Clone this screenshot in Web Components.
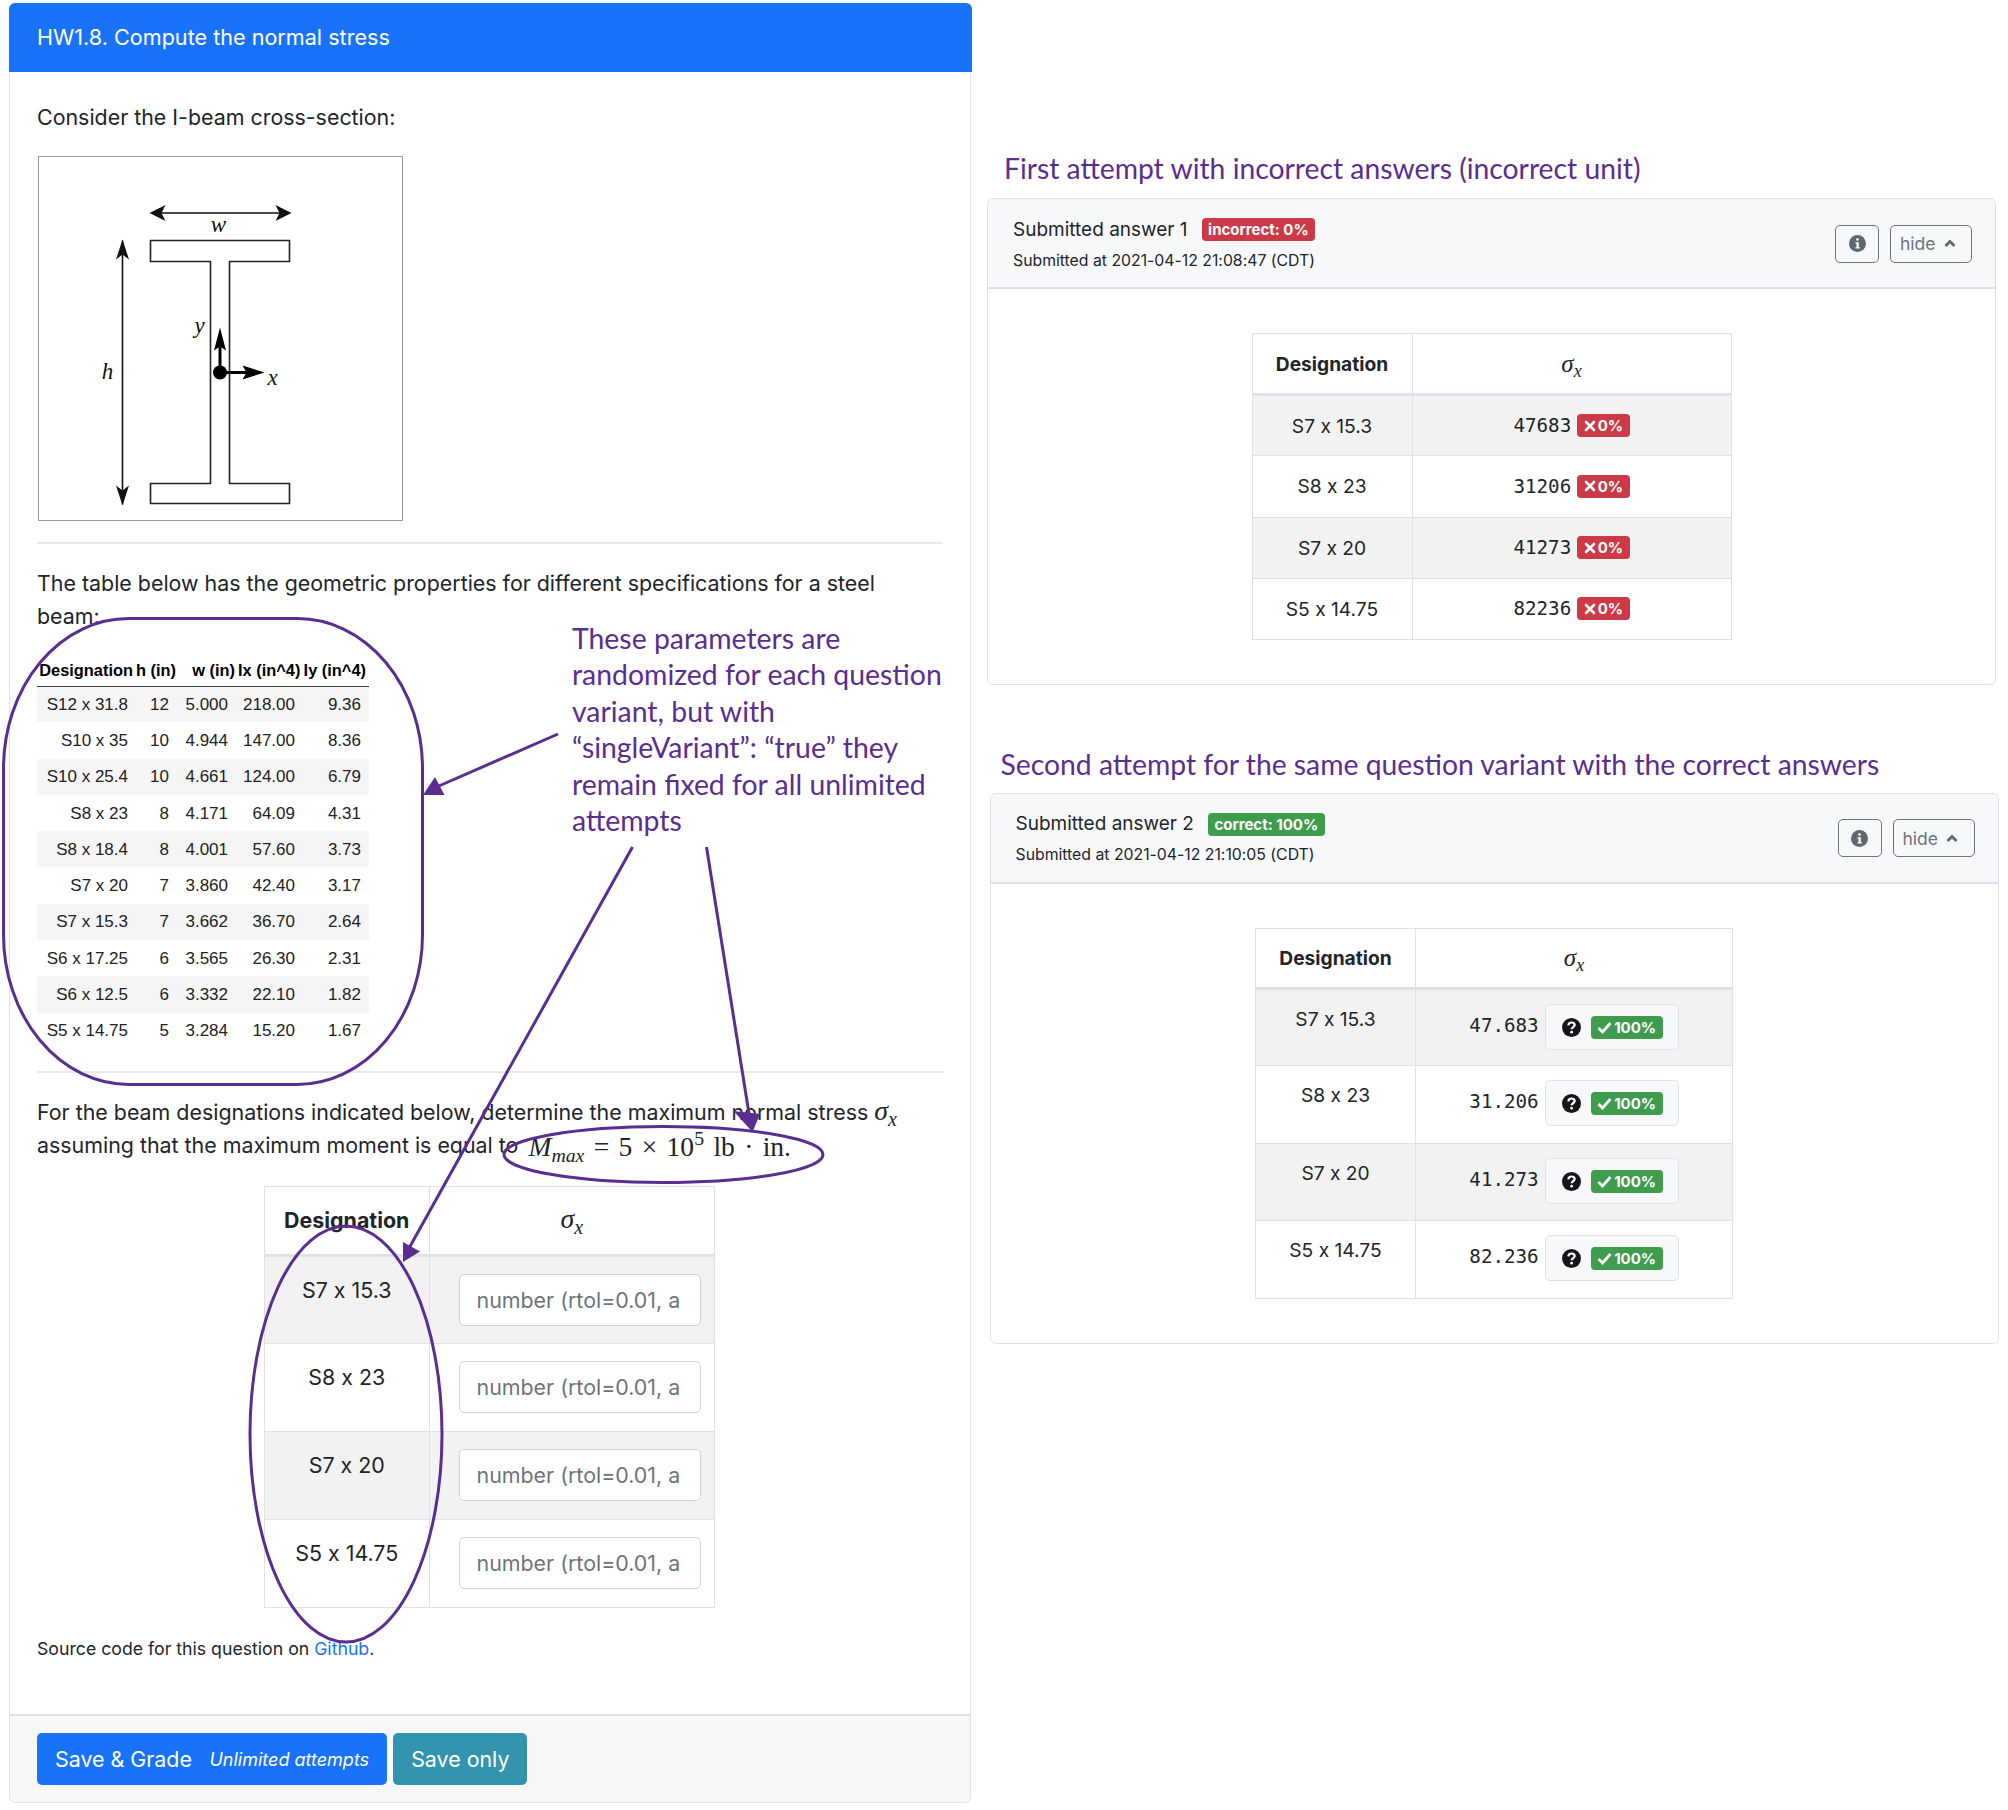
<!DOCTYPE html>
<html lang="en">
<head>
<meta charset="utf-8">
<title>HW1.8</title>
<style>
  html, body { margin: 0; background: #fff; }
  body { width: 2008px; height: 1810px; overflow: hidden; position: relative; font-family: Inter, "Liberation Sans", sans-serif; font-feature-settings: "calt" 0; color: #212529; }
  .page { display: flex; align-items: flex-start; padding: 3px 0 0 9px; }
</style>
</head>
<body>
<div class="page">
  <hw-question title="HW1.8. Compute the normal stress">
    <hw-text>Consider the I-beam cross-section:</hw-text>
    <beam-figure></beam-figure>
    <hw-rule></hw-rule>
    <hw-text>The table below has the geometric properties for different specifications for a steel<br>beam:</hw-text>
    <geo-table></geo-table>
    <hw-rule class="second"></hw-rule>
    <hw-text>For the beam designations indicated below, determine the maximum normal stress <sigma-x></sigma-x><br>assuming that the maximum moment is equal to <max-moment></max-moment></hw-text>
    <answer-table mode="input"></answer-table>
    <source-note></source-note>
    <hw-button slot="footer" kind="primary">Save &amp; Grade <i>Unlimited attempts</i></hw-button>
    <hw-button slot="footer" kind="info">Save only</hw-button>
  </hw-question>
  <attempt-column></attempt-column>
</div>
<annot-layer></annot-layer>

<script>
const PURPLE = '#5a2d91'

class HwQuestion extends HTMLElement {
  constructor() {
    super()
    this.attachShadow({ mode: 'open' })
    this.shadowRoot.innerHTML = `
      <style>
        :host { display: flex; flex-direction: column; width: 962px; height: 1800px; box-sizing: border-box; border: 1.5px solid #e2e2e2; border-radius: 6px; font-size: 21.4px; line-height: 33px; }
        header { background: #1873fa; color: #fff; font-size: 21.6px; height: 69px; margin: -1.5px -1.5px 0; border-radius: 6px 6px 0 0; padding: 0 28.500px; display: flex; align-items: center; box-sizing: border-box; }
        main { flex: 1; padding: 29px 27px 0; }
        footer { height: 88px; box-sizing: border-box; background: #f7f7f7; border-top: 2px solid #e0e0e0; padding: 17px 27px; display: flex; gap: 6px; border-radius: 0 0 6px 6px; }
      </style>
      <header></header>
      <main><slot></slot></main>
      <footer><slot name="footer"></slot></footer>`
    this.shadowRoot.querySelector('header').textContent = this.getAttribute('title')
  }
}

class HwText extends HTMLElement {
  constructor() {
    super()
    this.attachShadow({ mode: 'open' })
    this.shadowRoot.innerHTML = `<style>:host { display: block; white-space: nowrap; }</style><slot></slot>`
  }
}

class HwRule extends HTMLElement {
  constructor() {
    super()
    this.attachShadow({ mode: 'open' })
    this.shadowRoot.innerHTML = `<style>:host { display: block; height: 2px; background: #e8e8e8; margin: 21px 0 23px; width: 906px; }
      :host(.second) { margin: 22px 0 23px; }</style>`
  }
}

class HwButton extends HTMLElement {
  constructor() {
    super()
    this.attachShadow({ mode: 'open' })
    this.shadowRoot.innerHTML = `
      <style>
        :host { display: flex; align-items: center; height: 52px; box-sizing: border-box; padding: 0 18px; border-radius: 5px; color: #fff; font-size: 21.4px; white-space: nowrap; background: #1873fa; }
        :host([kind=info]) { background: #3594ad; }
        ::slotted(i) { font-size: 18px; margin-left: 17.500px; }
      </style><slot></slot>`
  }
}

class SigmaX extends HTMLElement {
  constructor() {
    super()
    this.attachShadow({ mode: 'open' })
    this.shadowRoot.innerHTML = `
      <style>
        :host { display: inline-block; font: italic 1.3em "Liberation Serif", serif; line-height: 1; white-space: nowrap; }
        sub { font-size: .72em; vertical-align: -0.28em; line-height: 0; }
      </style>σ<sub>x</sub>`
  }
}

class MaxMoment extends HTMLElement {
  constructor() {
    super()
    this.attachShadow({ mode: 'open' })
    this.shadowRoot.innerHTML = `
      <style>
        :host { display: inline-block; margin-left: 4px; font: 27.500px "Liberation Serif", serif; word-spacing: 2.500px; line-height: 1; white-space: nowrap; vertical-align: -3px; }
        sub { font-size: .72em; vertical-align: -0.3em; line-height: 0; font-style: italic; }
        sup { font-size: .72em; vertical-align: .55em; line-height: 0; }
      </style><i>M</i><sub>max</sub> = 5 × 10<sup>5</sup> lb · in.`
  }
}

class BeamFigure extends HTMLElement {
  constructor() {
    super()
    this.attachShadow({ mode: 'open' })
    this.shadowRoot.innerHTML = `
      <style>
        :host { display: block; width: 365px; height: 365px; box-sizing: border-box; border: 1.5px solid #9a9a9a; margin: 22px 0 0 .75px; }
        svg { display: block; }
        text { font: italic 23px "Liberation Serif", serif; fill: #111; text-anchor: middle; }
      </style>
      <svg width="362" height="362" viewBox="1.5 0.5 362 362">
        <path d="M113 84H252V105H192V327H252V347H113V327H173V105H113Z" fill="none" stroke="#222" stroke-width="1.6"/>
        <path d="M114 56.500H252" stroke="#111" stroke-width="1.6"/>
        <path d="M112 56.500l16-8-4 8 4 8zM254 56.500l-16-8 4 8-4 8z" fill="#111"/>
        <path d="M85 84V348" stroke="#111" stroke-width="1.6"/>
        <path d="M85 83l-6.500 20 6.500-5 6.500 5zM85 349l-6.500-20 6.500 5 6.500-5z" fill="#111"/>
        <path d="M182.500 216V190" stroke="#000" stroke-width="3"/>
        <path d="M182.500 171l-6 23 6-4 6 4z" fill="#000"/>
        <path d="M182.500 216H212" stroke="#000" stroke-width="3"/>
        <path d="M227 216l-22-7 4 7-4 7z" fill="#000"/>
        <circle cx="182.500" cy="216" r="7" fill="#000"/>
        <text x="181" y="75">w</text>
        <text x="70" y="222">h</text>
        <text x="162" y="176">y</text>
        <text x="235" y="228">x</text>
      </svg>`
  }
}

class GeoTable extends HTMLElement {
  constructor() {
    super()
    this.attachShadow({ mode: 'open' })
    const rows = [
      ['S12 x 31.8', '12', '5.000', '218.00', '9.36'],
      ['S10 x 35', '10', '4.944', '147.00', '8.36'],
      ['S10 x 25.4', '10', '4.661', '124.00', '6.79'],
      ['S8 x 23', '8', '4.171', '64.09', '4.31'],
      ['S8 x 18.4', '8', '4.001', '57.60', '3.73'],
      ['S7 x 20', '7', '3.860', '42.40', '3.17'],
      ['S7 x 15.3', '7', '3.662', '36.70', '2.64'],
      ['S6 x 17.25', '6', '3.565', '26.30', '2.31'],
      ['S6 x 12.5', '6', '3.332', '22.10', '1.82'],
      ['S5 x 14.75', '5', '3.284', '15.20', '1.67']
    ]
    const body = rows.map(r => `<tr>${r.map(c => `<td>${c}</td>`).join('')}</tr>`).join('')
    this.shadowRoot.innerHTML = `
      <style>
        :host { display: block; margin-top: 23px; font-family: "Liberation Sans", sans-serif; }
        table { border-collapse: collapse; table-layout: fixed; width: 332px; }
        th { font-size: 16.4px; font-weight: bold; height: 30px; padding: 0 3px 0 0; text-align: right; border-bottom: 1.5px solid #444; color: #000; white-space: nowrap; line-height: 1; }
        td { font-size: 17px; height: 36.300px; padding: 0 8px 0 0; text-align: right; box-sizing: border-box; line-height: 1; color: #222; }
        tr:nth-child(odd) td { background: #f5f5f5; }
        td:nth-child(3) { padding-right: 10px; }
      </style>
      <table>
        <colgroup><col style="width:99px"><col style="width:41px"><col style="width:61px"><col style="width:65px"><col style="width:66px"></colgroup>
        <thead><tr><th>Designation</th><th>h (in)</th><th>w (in)</th><th>Ix (in^4)</th><th>Iy (in^4)</th></tr></thead>
        <tbody>${body}</tbody>
      </table>`
  }
}

class ScoreBadge extends HTMLElement {
  constructor() {
    super()
    this.attachShadow({ mode: 'open' })
    const mark = {
      x: `<svg width="12" height="12" viewBox="0 0 12 12"><path d="M2 2L10 10M10 2L2 10" stroke="#fff" stroke-width="2.600" stroke-linecap="round"/></svg>`,
      check: `<svg width="15" height="13" viewBox="0 0 15 13"><path d="M1.500 7L5.500 11L13.500 2" fill="none" stroke="#fff" stroke-width="2.800"/></svg>`
    }[this.getAttribute('mark')] || ''
    this.shadowRoot.innerHTML = `
      <style>
        :host { display: inline-flex; align-items: center; gap: 2px; height: 23px; box-sizing: border-box; padding: 0 6.500px; border-radius: 4px; background: #cb3a46; color: #fff; font: 700 15px Inter, "Liberation Sans", sans-serif; white-space: nowrap; }
        :host([kind=good]) { background: #3f9c4d; }
      </style>${mark}<slot></slot>`
  }
}

class HelpBox extends HTMLElement {
  constructor() {
    super()
    this.attachShadow({ mode: 'open' })
    this.shadowRoot.innerHTML = `
      <style>
        :host { display: inline-flex; align-items: center; box-sizing: border-box; width: 134px; height: 46px; padding: 1px 0 0 16px; gap: 10px; background: #f7f8fa; border: 1.5px solid #dee2e6; border-radius: 5px; }
      </style>
      <svg width="19" height="19" viewBox="0 0 19 19"><circle cx="9.500" cy="9.500" r="9.500" fill="#14171a"/><path d="M6.300 7.300C6.500 5.400 7.900 4.500 9.500 4.500C11.300 4.500 12.700 5.500 12.700 7.100C12.700 9.300 9.600 9.200 9.600 11.300" fill="none" stroke="#fff" stroke-width="2.200"/><circle cx="9.600" cy="14.200" r="1.400" fill="#fff"/></svg>
      <score-badge kind="good" mark="check">100%</score-badge>`
  }
}

class AnswerTable extends HTMLElement {
  constructor() {
    super()
    this.attachShadow({ mode: 'open' })
    const mode = this.getAttribute('mode')
    const names = ['S7 x 15.3', 'S8 x 23', 'S7 x 20', 'S5 x 14.75']
    const vals = { bad: ['47683', '31206', '41273', '82236'], good: ['47.683', '31.206', '41.273', '82.236'] }[mode]
    const cell = i => {
      if (mode === 'input') return `<div class="field">number (rtol=0.01, a</div>`
      const tail = mode === 'bad'
        ? `<score-badge mark="x">0%</score-badge>`
        : `<help-box></help-box>`
      return `<div class="val"><code>${vals[i]}</code>${tail}</div>`
    }
    const body = names.map((n, i) => `<tr><td>${n}</td><td>${cell(i)}</td></tr>`).join('')
    this.shadowRoot.innerHTML = `
      <style>
        :host { display: block; width: fit-content; }
        :host([mode=input]) { margin: 24px 0 0 227px; font-size: 21.4px; line-height: 33px; }
        :host([mode=bad]), :host([mode=good]) { margin: 0 auto; font-size: 19.2px; line-height: 28px; }
        table { border-collapse: collapse; table-layout: fixed; }
        th, td { border: 1.5px solid #dee2e6; text-align: center; padding: 0; box-sizing: border-box; }
        th { font-weight: 700; border-bottom-width: 3px; }
        td { vertical-align: top; }
        tr:nth-child(odd) td { background: #f2f2f2; }
        :host([mode=input]) table { width: 451px; }
        :host([mode=input]) th { height: 69px; }
        :host([mode=input]) td { height: 88px; padding: 17px 0; }
        :host([mode=input]) td + td { padding: 17px 0 0 29px; text-align: left; }
        .field { width: 242px; height: 52px; box-sizing: border-box; background: #fff; border: 1.5px solid #ced4da; border-radius: 5px; color: #6c757d; padding: 9px 0 0 17px; line-height: 33px; white-space: nowrap; }
        :host([mode=bad]) table { width: 480px; }
        :host([mode=bad]) th { height: 61px; }
        :host([mode=bad]) th + th, :host([mode=good]) th + th { padding-top: 3px; }
        :host([mode=bad]) td { height: 61.300px; vertical-align: middle; }
        :host([mode=bad]) .val { vertical-align: middle; margin-bottom: 3px; }
        :host([mode=good]) table { width: 478px; }
        :host([mode=good]) th { height: 60px; }
        :host([mode=good]) td { height: 77.500px; padding-top: 15px; }
        :host([mode=good]) td + td { padding-top: 14px; }
        :host([mode=good]) code { margin-top: -3px; }
        .val { display: inline-flex; align-items: center; gap: 6px; vertical-align: top; }
        code { font: 19.2px "DejaVu Sans Mono", monospace; }
      </style>
      <table>
        <colgroup><col style="width:${mode === 'input' ? 164.5 : 160}px"><col></colgroup>
        <thead><tr><th>Designation</th><th><sigma-x></sigma-x></th></tr></thead>
        <tbody>${body}</tbody>
      </table>`
  }
}

class SourceNote extends HTMLElement {
  constructor() {
    super()
    this.attachShadow({ mode: 'open' })
    this.shadowRoot.innerHTML = `
      <style>
        :host { display: block; margin-top: 27px; font-size: 17.7px; line-height: 28px; }
        a { color: #1873fa; text-decoration: none; }
      </style>Source code for this question on <a href="#">Github</a>.`
  }
}

class SubmissionCard extends HTMLElement {
  constructor() {
    super()
    this.attachShadow({ mode: 'open' })
    const kind = this.getAttribute('kind')
    this.shadowRoot.innerHTML = `
      <style>
        :host { display: block; width: 1009px; box-sizing: border-box; border: 1.5px solid #dee2e6; border-radius: 6px; }
        header { height: 90px; box-sizing: border-box; background: #f7f8fa; border-bottom: 2px solid #dee2e6; border-radius: 6px 6px 0 0; padding: 0 23px 0 25px; display: flex; justify-content: space-between; align-items: center; }
        .who { padding-top: 2px; }
        .title { display: flex; align-items: center; gap: 14px; font-size: 19px; line-height: 28px; margin-bottom: 3px; white-space: nowrap; }
        .when { font-size: 15.8px; line-height: 24px; margin-top: 5px; white-space: nowrap; }
        .btns { display: flex; gap: 11px; margin-top: 1px; }
        button { height: 38px; box-sizing: border-box; background: none; border: 1.5px solid #6c757d; border-radius: 5px; color: #6c757d; font: 17.5px Inter, "Liberation Sans", sans-serif; display: flex; align-items: center; justify-content: center; padding: 0; }
        .info { width: 44px; }
        .hide { width: 82px; gap: 8px; justify-content: flex-start; padding-left: 9px; }
        main { padding: 44px 0 44px; }
      </style>
      <header>
        <div class="who">
          <div class="title"><span></span><score-badge kind="${kind}"></score-badge></div>
          <div class="when"></div>
        </div>
        <div class="btns">
          <button class="info" aria-label="info"><svg width="17" height="17" viewBox="0 0 17 17"><circle cx="8.500" cy="8.500" r="8.500" fill="#5f6870"/><rect x="7.200" y="3.200" width="2.600" height="2.600" rx="1.200" fill="#fff"/><path d="M6.500 7.200H9.800V12.200H10.800V13.500H6.500V12.200H7.500V8.500H6.500Z" fill="#fff"/></svg></button>
          <button class="hide">hide <svg width="12" height="9" viewBox="0 0 12 9"><path d="M1.500 7L6 2.500L10.500 7" fill="none" stroke="#5f6870" stroke-width="2.800"/></svg></button>
        </div>
      </header>
      <main><slot></slot></main>`
    this.shadowRoot.querySelector('.title span').textContent = this.getAttribute('label')
    this.shadowRoot.querySelector('score-badge').textContent = this.getAttribute('score')
    this.shadowRoot.querySelector('.when').textContent = this.getAttribute('when')
  }
}

class AttemptColumn extends HTMLElement {
  constructor() {
    super()
    this.attachShadow({ mode: 'open' })
    this.shadowRoot.innerHTML = `
      <style>
        :host { display: block; margin-left: 16px; padding-top: 145px; }
        h2 { font: 400 28.300px/40px Lato, sans-serif; color: ${PURPLE}; margin: 0 0 10px 17px; white-space: nowrap; }
        .second { margin-left: 2.500px; }
        .second h2 { margin: 59px 0 8.500px 11px; }
      </style>
      <h2>First attempt with incorrect answers (incorrect unit)</h2>
      <submission-card label="Submitted answer 1" score="incorrect: 0%" kind="bad" when="Submitted at 2021-04-12 21:08:47 (CDT)">
        <answer-table mode="bad"></answer-table>
      </submission-card>
      <div class="second">
        <h2>Second attempt for the same question variant with the correct answers</h2>
        <submission-card label="Submitted answer 2" score="correct: 100%" kind="good" when="Submitted at 2021-04-12 21:10:05 (CDT)">
          <answer-table mode="good"></answer-table>
        </submission-card>
      </div>`
  }
}

// purple notes drawn over the finished screenshots
class AnnotLayer extends HTMLElement {
  constructor() {
    super()
    this.attachShadow({ mode: 'open' })
    this.shadowRoot.innerHTML = `
      <style>
        :host { position: absolute; left: 0; top: 0; width: 2008px; height: 1810px; pointer-events: none; }
        svg { position: absolute; left: 0; top: 0; }
        .note { position: absolute; left: 572px; top: 620px; font: 400 28.400px/36.400px Lato, sans-serif; color: ${PURPLE}; white-space: nowrap; }
      </style>
      <svg width="2008" height="1810" fill="none" stroke="${PURPLE}" stroke-width="3">
        <rect x="3.500" y="618.500" width="419" height="466" rx="125" ry="150"/>
        <ellipse cx="663.500" cy="1154.500" rx="159.500" ry="28"/>
        <ellipse cx="346" cy="1434" rx="96" ry="208"/>
        <path d="M558 734L432 789"/>
        <path d="M632.500 847L408 1250"/>
        <path d="M706.500 847L750 1120"/>
        <path d="M423 795L435 777L444.500 795Z" fill="${PURPLE}" stroke="none"/>
        <path d="M403 1262L403 1242L420 1251.500Z" fill="${PURPLE}" stroke="none"/>
        <path d="M752.500 1132L733.500 1111L760 1114Z" fill="${PURPLE}" stroke="none"/>
      </svg>
      <div class="note">These parameters are<br>randomized for each question<br>variant, but with<br>“singleVariant”: “true” they<br>remain fixed for all unlimited<br>attempts</div>`
  }
}

customElements.define('score-badge', ScoreBadge)
customElements.define('help-box', HelpBox)
customElements.define('sigma-x', SigmaX)
customElements.define('max-moment', MaxMoment)
customElements.define('hw-text', HwText)
customElements.define('hw-rule', HwRule)
customElements.define('hw-button', HwButton)
customElements.define('beam-figure', BeamFigure)
customElements.define('geo-table', GeoTable)
customElements.define('answer-table', AnswerTable)
customElements.define('source-note', SourceNote)
customElements.define('submission-card', SubmissionCard)
customElements.define('attempt-column', AttemptColumn)
customElements.define('hw-question', HwQuestion)
customElements.define('annot-layer', AnnotLayer)
</script>
</body>
</html>
